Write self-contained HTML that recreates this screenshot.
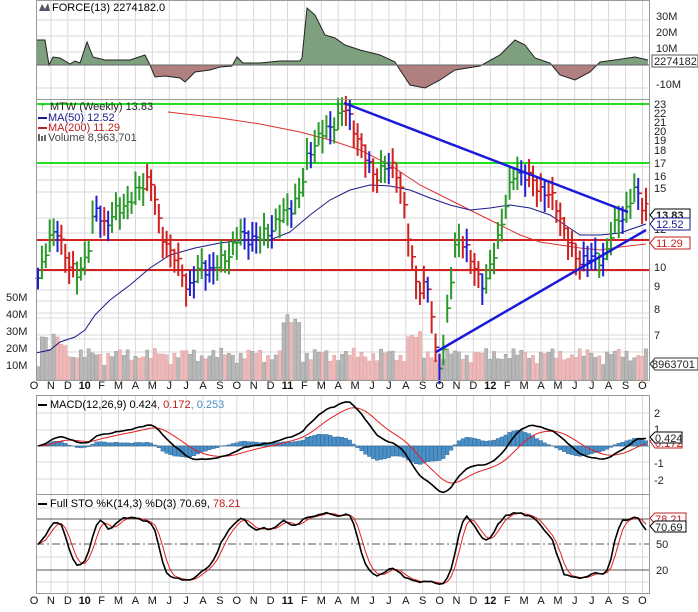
<!DOCTYPE html>
<html><head><meta charset="utf-8"><style>
body{margin:0;background:#fff;width:698px;height:607px;overflow:hidden;font-family:"Liberation Sans",sans-serif}
svg text{font-family:"Liberation Sans",sans-serif;font-size:11px}
</style></head><body>
<svg id="s" width="698" height="607" xmlns="http://www.w3.org/2000/svg">
<rect width="698" height="607" fill="#fff"/>
<g id="grid" stroke="#d8d8d8" stroke-width="1"></g>
<g id="force"></g>
<line x1="36" y1="65" x2="650" y2="65" stroke="#666"/>
<g id="vol"></g>
<line x1="36" y1="104" x2="650" y2="104" stroke="#22dd22" stroke-width="2"/>
<line x1="36" y1="163" x2="650" y2="163" stroke="#22dd22" stroke-width="2"/>
<line x1="36" y1="240" x2="650" y2="240" stroke="#d42020" stroke-width="2"/>
<line x1="36" y1="270" x2="650" y2="270" stroke="#d42020" stroke-width="2"/>
<polyline fill="none" stroke="#e03030" stroke-width="1" points="168,112 220,118 260,124 300,132 330,140 360,150 390,165 420,185 450,200 480,215 500,225 520,235 540,242 560,245 580,248 600,250 620,247 646,244"/>
<polyline fill="none" stroke="#1a1a8a" stroke-width="1" points="36,353 50,350 60,342 75,337 85,330 95,315 110,300 130,285 150,268 170,255 195,248 220,243 245,240 270,240 290,232 310,215 330,200 350,190 370,185 390,186 410,190 430,198 450,205 470,210 490,208 510,205 530,208 550,215 565,225 580,235 600,235 620,233 646,224"/>
<g id="bars"></g>
<line x1="344" y1="103" x2="628" y2="212" stroke="#1a1ad8" stroke-width="2.5"/>
<line x1="436" y1="352" x2="646" y2="230" stroke="#1a1ad8" stroke-width="2.5"/>
<line x1="36" y1="446" x2="650" y2="446" stroke="#999"/>
<g id="macd"></g>
<line x1="36" y1="519" x2="650" y2="519" stroke="#555"/>
<line x1="36" y1="544" x2="650" y2="544" stroke="#555" stroke-dasharray="8,3,2,3"/>
<line x1="36" y1="570" x2="650" y2="570" stroke="#555"/>
<g id="sto"></g>
<g fill="none" stroke="#999"><rect x="36.5" y="0.5" width="613" height="99"/><rect x="36.5" y="99.5" width="613" height="281"/><rect x="36.5" y="395.5" width="613" height="99"/><rect x="36.5" y="494.5" width="613" height="99"/></g>
<text x="52" y="11" font-size="11">FORCE(13) 2274182.0</text>
<path d="M39,11 L42,4 L45,9 L48,3 L50,11Z" fill="#556"/>
<text x="50" y="110" fill="#222">MTW (Weekly) 13.83</text>
<text x="40" y="110" fill="#2a2" font-size="9">↑</text>
<rect x="38" y="117" width="9" height="2" fill="#1a1a8a"/><text x="48" y="121" fill="#1a1a8a">MA(50) 12.52</text>
<rect x="38" y="127" width="9" height="2" fill="#c02020"/><text x="48" y="131" fill="#c02020">MA(200) 11.29</text>
<rect x="38" y="134" width="2" height="7" fill="#666"/><rect x="41" y="136" width="2" height="5" fill="#666"/><rect x="44" y="135" width="2" height="6" fill="#666"/>
<text x="48" y="141" fill="#444">Volume 8,963,701</text>
<rect x="38" y="404" width="9" height="2" fill="#000"/><text x="50" y="408">MACD(12,26,9) 0.424<tspan fill="#c02020">, 0.172</tspan><tspan fill="#4a90c0">, 0.253</tspan></text>
<rect x="38" y="503" width="9" height="2" fill="#000"/><text x="50" y="507">Full STO %K(14,3) %D(3) 70.69,<tspan fill="#c02020"> 78.21</tspan></text>
<g fill="#222" font-size="11">
<text x="656" y="20">30M</text><text x="656" y="36">20M</text><text x="656" y="52">10M</text><text x="656" y="88">-10M</text>
<rect x="652" y="55" width="46" height="12" fill="#fff" stroke="#555"/><text x="654" y="65">2274182</text>
<text x="654" y="108">23</text><text x="654" y="117">22</text><text x="654" y="126">21</text><text x="654" y="135">20</text><text x="654" y="144">19</text><text x="654" y="154">18</text><text x="654" y="167">17</text><text x="654" y="180">16</text><text x="654" y="192">15</text>
<text x="654" y="218">13</text><text x="654" y="233">12</text><text x="654" y="271">10</text><text x="654" y="290">9</text><text x="654" y="313">8</text><text x="654" y="339">7</text>
<path d="M650,215 L655,209 L690,209 L690,221 L655,221Z" fill="#fff" stroke="#000"/><text x="656" y="219" font-weight="bold">13.83</text>
<path d="M650,224 L655,218 L690,218 L690,230 L655,230Z" fill="#fff" stroke="#1a1a8a"/><text x="656" y="228" fill="#1a1a8a">12.52</text>
<path d="M650,243 L655,237 L690,237 L690,249 L655,249Z" fill="#fff" stroke="#c02020"/><text x="656" y="247" fill="#c02020">11.29</text>
<path d="M650,364 L655,358 L698,358 L698,370 L655,370Z" fill="#fff" stroke="#333"/><text x="652" y="368">8963701</text>
<text x="6" y="301">50M</text><text x="6" y="318">40M</text><text x="6" y="335">30M</text><text x="6" y="352">20M</text><text x="6" y="369">10M</text>
<text x="654" y="417">2</text><text x="654" y="433">1</text><text x="654" y="467">-1</text><text x="654" y="484">-2</text>
<path d="M650,441 L655,436 L682,436 L682,448 L655,448Z" fill="#fff" stroke="#c02020"/><text x="655" y="447" fill="#c02020">0.172</text>
<path d="M650,437 L655,432 L682,432 L682,443 L655,443Z" fill="#fff" stroke="#000"/><text x="655" y="442">0.424</text>
<path d="M650,518 L655,513 L686,513 L686,524 L655,524Z" fill="#fff" stroke="#c02020"/><text x="655" y="523" fill="#c02020">78.21</text>
<path d="M650,526 L655,521 L686,521 L686,532 L655,532Z" fill="#fff" stroke="#000"/><text x="655" y="531">70.69</text>
<text x="656" y="548">50</text><text x="656" y="574">20</text>
</g>
<g id="months" fill="#111"></g>
</svg>
<script>
var NS="http://www.w3.org/2000/svg";
function el(p,t,a){var e=document.createElementNS(NS,t);for(var k in a)e.setAttribute(k,a[k]);document.getElementById(p).appendChild(e);return e;}
var ml=["O","N","D","10","F","M","A","M","J","J","A","S","O","N","D","11","F","M","A","M","J","J","A","S","O","N","D","12","F","M","A","M","J","J","A","S","O"];
var x0=38,pm=16.9;
for(var i=0;i<ml.length;i++){var x=x0+i*pm;
 if(i>0)[[0,100],[100,381],[395,495],[495,594]].forEach(function(r){el("grid","line",{x1:x-4,y1:r[0],x2:x-4,y2:r[1]});});
 var b=ml[i].length>1;
 [389,604].forEach(function(y){var t=el("months","text",{x:x-4,y:y,"text-anchor":"middle","font-size":b?"12":"11","font-weight":b?"bold":"normal"});t.textContent=ml[i];});
}
[20,36,52,88,167,180,192,218,233,271,290,313,339,301,318,335,352,369,413,430,462,479,530,557,582,508].forEach(function(y){el("grid","line",{x1:36,y1:y,x2:650,y2:y});});
var fp=[[36,40],[45,40],[49,65],[53,57],[60,58],[70,64],[75,61],[80,63],[87,42],[93,57],[105,60],[130,60],[145,55],[150,65],[155,77],[165,76],[180,78],[185,82],[195,72],[210,70],[220,67],[232,66],[237,57],[243,63],[260,63],[280,61],[300,61],[302,58],[307,8],[315,15],[325,35],[335,38],[345,45],[360,50],[380,55],[395,62],[400,70],[410,85],[425,88],[440,80],[455,70],[480,66],[500,55],[515,40],[525,45],[535,58],[550,63],[560,75],[575,80],[590,72],[600,62],[615,60],[635,57],[648,60]];
var pts=fp.map(function(p){return p[0]+","+p[1]}).join(" ");
el("force","defs",{}).innerHTML='<clipPath id="ca"><rect x="36" y="0" width="614" height="65"/></clipPath><clipPath id="cb"><rect x="36" y="65" width="614" height="35"/></clipPath>';
el("force","polygon",{points:"36,65 "+pts+" 648,65",fill:"#7fa07f","clip-path":"url(#ca)"});
el("force","polygon",{points:"36,65 "+pts+" 648,65",fill:"#b08080","clip-path":"url(#cb)"});
el("force","polyline",{points:pts,fill:"none",stroke:"#222","stroke-width":1});
var kp=[[38,9.5],[48,11.5],[58,12],[70,10],[78,9.6],[88,11],[95,13.5],[105,12.5],[120,13.5],[135,14.5],[150,16],[160,12],[175,10.5],[188,9],[200,10],[215,10],[225,10.5],[240,11.8],[260,11.6],[275,12.5],[295,14],[302,15],[308,18],[320,19.5],[335,21],[345,22.5],[352,21],[362,18],[375,16],[385,16.5],[395,17],[403,14],[410,11],[418,9],[428,9],[436,6.5],[442,6],[450,9],[457,12],[465,11],[475,10],[485,9],[495,11],[505,13.5],[515,16.5],[525,16],[540,15],[555,14],[565,12],[575,10.5],[590,10.5],[605,10.5],[612,12],[620,13],[628,13.5],[635,15],[640,14],[646,13.8]];
function pa(x){for(var i=1;i<kp.length;i++)if(x<=kp[i][0]){var a=kp[i-1],b=kp[i],t=(x-a[0])/(b[0]-a[0]);return a[1]+(b[1]-a[1])*t;}return kp[kp.length-1][1];}
function py(p){return 104+(3.1355-Math.log(p))*197;}
var N=157,dx=608/156,C=[],H=[],L=[];
for(var i=0;i<N;i++){var x=38+i*dx,p=pa(x)*(1+0.025*Math.sin(i*2.3)+0.015*Math.sin(i*5.1));C.push(p);var r=0.055+0.03*Math.abs(Math.sin(i*1.7));H.push(p*(1+r));L.push(p*(1-r));}
for(var i=0;i<N;i++){var x=38+i*dx,prev=i?C[i-1]:C[0],d=C[i]-prev;
 var slope=pa(x+8)-pa(x-8);var col=slope>0.3?"#2a9a2a":(slope<-0.3?"#d02020":"#2020d0");
 if(Math.abs(d)<0.05*C[i]&&i%5==0)col="#2020d0";
 el("bars","line",{x1:x,y1:py(H[i]),x2:x,y2:py(L[i]),stroke:col,"stroke-width":2});
 el("bars","line",{x1:x-2.5,y1:py(prev),x2:x,y2:py(prev),stroke:col,"stroke-width":1.5});
 el("bars","line",{x1:x,y1:py(C[i]),x2:x+2.5,y2:py(C[i]),stroke:col,"stroke-width":1.5});
 var v=8+6*Math.abs(Math.sin(i*1.3))+5*Math.abs(Math.sin(i*0.37));
 if(i<8)v+=12*Math.abs(Math.sin(i));if(x>280&&x<300)v+=20;if(x>405&&x<420)v+=10;
 el("vol","rect",{x:x-1.6,y:380-v*1.68,width:3.2,height:v*1.68,fill:d>=0?"#b8b8b8":"#f0b8b8",stroke:d>=0?"#999":"#d8a0a0","stroke-width":0.5});
}
function ema(a,n){var k=2/(n+1),o=[a[0]];for(var i=1;i<a.length;i++)o.push(a[i]*k+o[i-1]*(1-k));return o;}
var e12=ema(C,12),e26=ema(C,26),M=C.map(function(c,i){return e12[i]-e26[i]}),S=ema(M,9);
function my(v){return 446-v*17;}
var mp="",sp="";
for(var i=0;i<N;i++){var x=38+i*dx,h=M[i]-S[i];
 el("macd","rect",{x:x-1.8,y:Math.min(my(h),446),width:3.6,height:Math.abs(h*17),fill:"#4a90c8",stroke:"#2a6090","stroke-width":0.4});
 mp+=x+","+my(M[i])+" ";sp+=x+","+my(S[i])+" ";}
el("macd","polyline",{points:sp,fill:"none",stroke:"#e02020","stroke-width":1});
el("macd","polyline",{points:mp,fill:"none",stroke:"#000","stroke-width":1.6});
var K=[];for(var i=0;i<N;i++){var hh=-1e9,ll=1e9;for(var j=Math.max(0,i-13);j<=i;j++){hh=Math.max(hh,H[j]);ll=Math.min(ll,L[j]);}K.push(100*(C[i]-ll)/(hh-ll));}
function sma(a,n){return a.map(function(v,i){var s=0,c=0;for(var j=Math.max(0,i-n+1);j<=i;j++){s+=a[j];c++;}return s/c;});}
var FK=sma(K,3),FD=sma(FK,3);function sy(v){return 588-v*0.87;}
var kp2="",dp="";for(var i=0;i<N;i++){var x=38+i*dx;kp2+=x+","+sy(FK[i])+" ";dp+=x+","+sy(FD[i])+" ";}
el("sto","polyline",{points:dp,fill:"none",stroke:"#e02020","stroke-width":1});
el("sto","polyline",{points:kp2,fill:"none",stroke:"#000","stroke-width":1.6});
</script>
</body></html>
